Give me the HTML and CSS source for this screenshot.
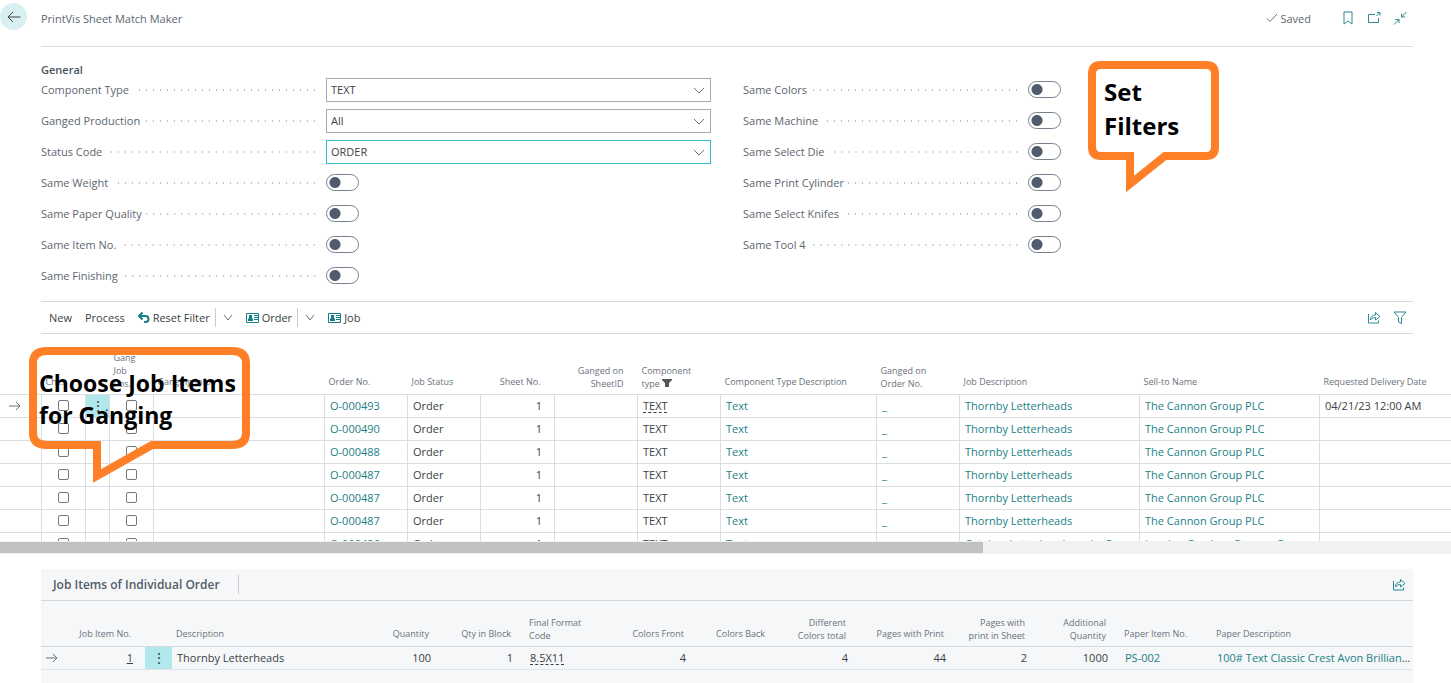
FILE: index.html
```
<!DOCTYPE html>
<html lang="en">
<head>
  <meta charset="UTF-8">
  <meta name="viewport" content="width=device-width, initial-scale=1.0">
  <title>PrintVis Sheet Match Maker</title>
  <link rel="stylesheet" href="styles.css">
</head>
<body>
  <header class="topbar">
    <button type="button" class="back" aria-label="Back">
      <svg width="16" height="16" viewBox="0 0 16 16"><path d="M14.500 8H2M7 3L2 8l5 5"/></svg>
    </button>
    <div class="topbar-main">
      <h1>PrintVis Sheet Match Maker</h1>
      <span class="saved"><svg width="12" height="12" viewBox="0 0 12 12"><path d="M1 6.500l3 3 7-7.500"/></svg>Saved</span>
      <button type="button" class="icon" aria-label="Bookmark"><svg width="16" height="16" viewBox="0 0 16 16"><path d="M4 2h8v12l-4-3-4 3z"/></svg></button>
      <button type="button" class="icon" aria-label="Open in new window"><svg width="16" height="16" viewBox="0 0 16 16"><path d="M9 4.500H2.500v8h10V8M10.500 6l3-3M11 2.500h3v3"/></svg></button>
      <button type="button" class="icon" aria-label="Collapse"><svg width="16" height="16" viewBox="0 0 16 16"><path d="M14.500 2L9.500 7M9.500 3.500V7H13M2 14.500l5-5M3.500 9.500H7V13"/></svg></button>
    </div>
  </header>

  <main>
    <form class="general">
      <h2>General</h2>
      <div class="columns">
        <div class="column">
          <div class="field"><label for="componentType">Component Type</label><i></i><span class="select"><select id="componentType"><option>TEXT</option></select><svg width="12" height="8" viewBox="0 0 12 8"><path d="M1 1l5 5 5-5"/></svg></span></div>
          <div class="field"><label for="ganged">Ganged Production</label><i></i><span class="select"><select id="ganged"><option>All</option></select><svg width="12" height="8" viewBox="0 0 12 8"><path d="M1 1l5 5 5-5"/></svg></span></div>
          <div class="field"><label for="statusCode">Status Code</label><i></i><span class="select active"><select id="statusCode"><option>ORDER</option></select><svg width="12" height="8" viewBox="0 0 12 8"><path d="M1 1l5 5 5-5"/></svg></span></div>
          <div class="field"><label for="weight">Same Weight</label><i></i><span class="value"><input type="checkbox" class="switch" id="weight"></span></div>
          <div class="field"><label for="quality">Same Paper Quality</label><i></i><span class="value"><input type="checkbox" class="switch" id="quality"></span></div>
          <div class="field"><label for="itemNo">Same Item No.</label><i></i><span class="value"><input type="checkbox" class="switch" id="itemNo"></span></div>
          <div class="field"><label for="finishing">Same Finishing</label><i></i><span class="value"><input type="checkbox" class="switch" id="finishing"></span></div>
        </div>
        <div class="column">
          <div class="field"><label for="colors">Same Colors</label><i></i><span class="value"><input type="checkbox" class="switch" id="colors"></span></div>
          <div class="field"><label for="machine">Same Machine</label><i></i><span class="value"><input type="checkbox" class="switch" id="machine"></span></div>
          <div class="field"><label for="die">Same Select Die</label><i></i><span class="value"><input type="checkbox" class="switch" id="die"></span></div>
          <div class="field"><label for="cylinder">Same Print Cylinder</label><i></i><span class="value"><input type="checkbox" class="switch" id="cylinder"></span></div>
          <div class="field"><label for="knifes">Same Select Knifes</label><i></i><span class="value"><input type="checkbox" class="switch" id="knifes"></span></div>
          <div class="field"><label for="tool4">Same Tool 4</label><i></i><span class="value"><input type="checkbox" class="switch" id="tool4"></span></div>
        </div>
      </div>
    </form>

    <nav class="toolbar">
      <button type="button">New</button>
      <button type="button">Process</button>
      <button type="button"><svg class="undo" width="12" height="12" viewBox="0 0 12 12"><path d="M1 4h6.500a3 3 0 0 1 0 6H6M4.500 .5L1 4l3.500 3.500"/></svg>Reset Filter</button>
      <button type="button" class="more" aria-label="More reset options"><svg width="10" height="8" viewBox="0 0 10 8"><path d="M1 1l4 5 4-5"/></svg></button>
      <button type="button"><svg class="card" width="13" height="12" viewBox="0 0 13 12"><path class="frame" d="M.5 1.500h12v9H.5z"/><path d="M2 9V7l1-1V3h3v3l1 1v2zM8 3h4v1H8zM8 5h4v1H8zM8 7h4v1H8z"/></svg>Order</button>
      <button type="button" class="more" aria-label="More order options"><svg width="10" height="8" viewBox="0 0 10 8"><path d="M1 1l4 5 4-5"/></svg></button>
      <button type="button"><svg class="card" width="13" height="12" viewBox="0 0 13 12"><path class="frame" d="M.5 1.500h12v9H.5z"/><path d="M2 9V7l1-1V3h3v3l1 1v2zM8 3h4v1H8zM8 5h4v1H8zM8 7h4v1H8z"/></svg>Job</button>
      <span class="spacer"></span>
      <button type="button" class="icon" aria-label="Share"><svg width="16" height="16" viewBox="0 0 16 16"><path d="M2.500 4v9h10v-2.500M4.500 10c0-3.500 2-5 5-5V2.500L14 6.500l-4.500 3.500V7.500C7.500 7.500 6 8 4.500 10z"/></svg></button>
      <button type="button" class="icon" aria-label="Filter"><svg width="16" height="16" viewBox="0 0 16 16"><path d="M2 2h12L9.500 7.500v6l-3-1.500V7.500z"/></svg></button>
    </nav>

    <section class="grid">
      <table class="jobs">
        <colgroup>
          <col class="c-arrow"><col class="c-choose"><col class="c-menu"><col class="c-pos"><col class="c-info"><col class="c-order"><col class="c-status"><col class="c-sheet"><col class="c-wide"><col class="c-wide"><col class="c-type"><col class="c-wide"><col class="c-desc"><col class="c-desc"><col>
        </colgroup>
        <thead>
          <tr>
            <th></th><th>Ch...</th><th></th><th class="wrap">Gang<br>Job<br>Pos.</th><th>Ganging Info</th><th>Order No.</th><th>Job Status</th><th class="num">Sheet No.</th><th class="num wrap">Ganged on<br>SheetID</th>
            <th class="wrap">Component<br>type <svg width="10" height="8" viewBox="0 0 10 8"><path d="M0 0h10v1L7 4v4H3V4L0 1z"/></svg></th>
            <th>Component Type Description</th><th class="wrap">Ganged on<br>Order No.</th><th>Job Description</th><th>Sell-to Name</th><th>Requested Delivery Date</th>
          </tr>
        </thead>
        <tbody>
          <tr>
            <td class="arrow"><svg width="12" height="10" viewBox="0 0 12 10"><path d="M0 5h11M7 1l4 4-4 4"/></svg></td>
            <td class="tick"><input type="checkbox" aria-label="Choose"></td><td class="menu">⋮</td><td class="tick"><input type="checkbox" aria-label="Gang job position"></td><td></td>
            <td><a href="#">O-000493</a></td><td>Order</td><td class="num">1</td><td></td><td><span class="dotted">TEXT</span></td><td><a href="#">Text</a></td><td><a href="#">_</a></td><td><a href="#">Thornby Letterheads</a></td><td><a href="#">The Cannon Group PLC</a></td><td>04/21/23 12:00 AM</td>
          </tr>
          <tr>
            <td></td><td class="tick"><input type="checkbox" aria-label="Choose"></td><td></td><td class="tick"><input type="checkbox" aria-label="Gang job position"></td><td></td>
            <td><a href="#">O-000490</a></td><td>Order</td><td class="num">1</td><td></td><td>TEXT</td><td><a href="#">Text</a></td><td><a href="#">_</a></td><td><a href="#">Thornby Letterheads</a></td><td><a href="#">The Cannon Group PLC</a></td><td></td>
          </tr>
          <tr>
            <td></td><td class="tick"><input type="checkbox" aria-label="Choose"></td><td></td><td class="tick"><input type="checkbox" aria-label="Gang job position"></td><td></td>
            <td><a href="#">O-000488</a></td><td>Order</td><td class="num">1</td><td></td><td>TEXT</td><td><a href="#">Text</a></td><td><a href="#">_</a></td><td><a href="#">Thornby Letterheads</a></td><td><a href="#">The Cannon Group PLC</a></td><td></td>
          </tr>
          <tr>
            <td></td><td class="tick"><input type="checkbox" aria-label="Choose"></td><td></td><td class="tick"><input type="checkbox" aria-label="Gang job position"></td><td></td>
            <td><a href="#">O-000487</a></td><td>Order</td><td class="num">1</td><td></td><td>TEXT</td><td><a href="#">Text</a></td><td><a href="#">_</a></td><td><a href="#">Thornby Letterheads</a></td><td><a href="#">The Cannon Group PLC</a></td><td></td>
          </tr>
          <tr>
            <td></td><td class="tick"><input type="checkbox" aria-label="Choose"></td><td></td><td class="tick"><input type="checkbox" aria-label="Gang job position"></td><td></td>
            <td><a href="#">O-000487</a></td><td>Order</td><td class="num">1</td><td></td><td>TEXT</td><td><a href="#">Text</a></td><td><a href="#">_</a></td><td><a href="#">Thornby Letterheads</a></td><td><a href="#">The Cannon Group PLC</a></td><td></td>
          </tr>
          <tr>
            <td></td><td class="tick"><input type="checkbox" aria-label="Choose"></td><td></td><td class="tick"><input type="checkbox" aria-label="Gang job position"></td><td></td>
            <td><a href="#">O-000487</a></td><td>Order</td><td class="num">1</td><td></td><td>TEXT</td><td><a href="#">Text</a></td><td><a href="#">_</a></td><td><a href="#">Thornby Letterheads</a></td><td><a href="#">The Cannon Group PLC</a></td><td></td>
          </tr>
          <tr>
            <td></td><td class="tick"><input type="checkbox" aria-label="Choose"></td><td></td><td class="tick"><input type="checkbox" aria-label="Gang job position"></td><td></td>
            <td><a href="#">O-000486</a></td><td>Order</td><td class="num">1</td><td></td><td>TEXT</td><td><a href="#">Text</a></td><td><a href="#">_</a></td><td><a href="#">Catalog, Letterheads and a Cover</a></td><td><a href="#">London Candoxy Storage C</a></td><td></td>
          </tr>
        </tbody>
      </table>
    </section>
    <div class="scrollbar"><div class="thumb"></div></div>

    <section class="items">
      <div class="items-head">
        <h2>Job Items of Individual Order</h2>
        <button type="button" class="icon" aria-label="Share"><svg width="16" height="16" viewBox="0 0 16 16"><path d="M2.500 4v9h10v-2.500M4.500 10c0-3.500 2-5 5-5V2.500L14 6.500l-4.500 3.500V7.500C7.500 7.500 6 8 4.500 10z"/></svg></button>
      </div>
      <table class="lines">
        <colgroup>
          <col class="l-arrow"><col class="l-no"><col class="l-menu"><col class="l-desc"><col class="l-qty"><col class="l-block"><col class="l-format"><col class="l-front"><col class="l-back"><col class="l-back"><col class="l-print"><col class="l-back"><col class="l-back"><col class="l-paper"><col>
        </colgroup>
        <thead>
          <tr>
            <th></th><th class="num">Job Item No.</th><th></th><th>Description</th><th class="num">Quantity</th><th class="num">Qty in Block</th><th class="wrap">Final Format<br>Code</th><th class="num">Colors Front</th><th class="num">Colors Back</th><th class="num wrap">Different<br>Colors total</th><th class="num">Pages with Print</th><th class="num wrap">Pages with<br>print in Sheet</th><th class="num wrap">Additional<br>Quantity</th><th>Paper Item No.</th><th>Paper Description</th>
          </tr>
        </thead>
        <tbody>
          <tr>
            <td class="arrow"><svg width="12" height="10" viewBox="0 0 12 10"><path d="M0 5h11M7 1l4 4-4 4"/></svg></td>
            <td class="num"><u>1</u></td><td class="menu">⋮</td><td>Thornby Letterheads</td><td class="num">100</td><td class="num">1</td><td><span class="dotted">8.5X11</span></td><td class="num">4</td><td></td><td class="num">4</td><td class="num">44</td><td class="num">2</td><td class="num">1000</td><td><a href="#">PS-002</a></td><td class="last"><a href="#">100# Text Classic Crest Avon Brilliant White</a></td>
          </tr>
        </tbody>
      </table>
    </section>
  </main>

  <div class="callout callout-filters">
    <svg width="131" height="134" viewBox="0 0 131 134"><path d="M13 5h105q9 0 9 9v73q0 9-9 9H77L42 124V96H13q-9 0-9-9V14q0-9 9-9z"/></svg>
    <p>Set<br>Filters</p>
  </div>
  <div class="callout callout-jobs">
    <svg width="221" height="137" viewBox="0 0 221 137"><path d="M18 4h185q14 0 14 12v70q0 12-14 12H123L68 129V98H18Q4 98 4 86V16Q4 4 18 4z"/></svg>
    <p>Choose Job Items<br>for Ganging</p>
  </div>
</body>
</html>
```
FILE: styles.css
```
* {
  box-sizing: border-box;
}
body {
  font-family: "Open Sans", "Noto Sans", sans-serif;
  font-size: 11px;
  color: #3b3f44;
  background-color: #fff;
  margin: 0;
  position: relative;
  overflow: hidden;
}
h1, h2, p {
  margin: 0;
}
button {
  font: inherit;
  color: inherit;
  background: none;
  border: none;
  padding: 0;
  cursor: pointer;
}
svg {
  display: block;
  fill: none;
  stroke: #6b737b;
}
a {
  color: #1c7f85;
  text-decoration: none;
}
.icon svg {
  stroke: #2b8a90;
}

/* top bar */
.topbar {
  display: flex;
  margin-right: 38px;
}
.back {
  width: 27px;
  height: 27px;
  margin: 3px 14px 0 0;
  border-radius: 50%;
  background-color: #d8f0f2;
  display: flex;
  align-items: center;
  justify-content: center;
}
.back svg {
  stroke: #444;
}
.topbar-main {
  flex: 1;
  display: flex;
  align-items: center;
  height: 47px;
  padding-bottom: 10px;
  border-bottom: 1px solid #dcdfe2;
  color: #5d666f;
}
.topbar-main h1 {
  flex: 1;
  font-size: 11px;
  font-weight: normal;
}
.topbar-main .icon {
  margin-left: 10px;
}
.topbar-main .icon:last-child {
  margin-right: 5px;
}
.saved {
  display: flex;
  align-items: center;
  gap: 2px;
  margin-right: 19px;
}

/* filter fields */
.general {
  margin: 0 38px 0 41px;
  padding: 15px 0 10px;
  color: #5d666f;
}
.general h2 {
  font-size: 11px;
  font-weight: 600;
  line-height: 16px;
  color: #4c5661;
  margin-bottom: -4px;
}
.columns {
  display: flex;
  gap: 32px;
}
.column {
  flex: 1;
}
.field {
  display: flex;
  align-items: center;
  height: 31px;
}
.field i {
  flex: 1;
  height: 2px;
  margin: 0 8px 0 4px;
  background: radial-gradient(circle, #b4bac0 1px, transparent 1px) right center / 7px 2px repeat-x;
}
.value, .select {
  width: 385px;
  display: flex;
}
.select {
  position: relative;
}
.select select {
  appearance: none;
  font: inherit;
  color: #3b3f44;
  width: 100%;
  height: 24px;
  padding: 0 4px;
  background: #fff;
  border: 1px solid #a5abb3;
  border-radius: 0;
}
.select.active select {
  border-color: #30bfc8;
}
.select svg {
  position: absolute;
  right: 6px;
  top: 9px;
}
.switch {
  appearance: none;
  width: 33px;
  height: 17px;
  margin: 0;
  border: 1px solid #76808c;
  border-radius: 9px;
  background: radial-gradient(circle at 8px 50%, #505c6d 5px, transparent 6px);
}

/* action bar */
.toolbar {
  display: flex;
  align-items: center;
  height: 33px;
  margin: 0 38px 0 41px;
  padding: 0 5px 0 8px;
  border-top: 1px solid #d5d8dc;
  border-bottom: 1px solid #d5d8dc;
}
.toolbar button {
  display: flex;
  align-items: center;
  gap: 3px;
  margin-right: 13px;
}
.toolbar .more {
  height: 19px;
  margin-left: -8px;
  padding-left: 7px;
  border-left: 1px solid #c9cdd1;
}
.toolbar .icon {
  margin: 0 0 0 10px;
}
.spacer {
  flex: 1;
}
.undo {
  stroke: #14808a;
  stroke-width: 2;
}
.card path {
  fill: #14808a;
  stroke: none;
}
.card .frame {
  fill: none;
  stroke: #14808a;
}

/* tables */
table {
  width: 100%;
  table-layout: fixed;
  border-collapse: collapse;
}
th {
  font-size: 9px;
  font-weight: normal;
  line-height: 13px;
  text-align: left;
  vertical-align: bottom;
  white-space: nowrap;
  color: #6a727b;
  padding: 0 4px 6px;
}
th.wrap {
  padding-bottom: 4px;
}
th svg {
  display: inline-block;
  fill: #555;
  stroke: none;
}
td {
  padding: 0 5px;
  white-space: nowrap;
  overflow: hidden;
  text-overflow: ellipsis;
}
.num {
  text-align: right;
}
th.num {
  padding-right: 14px;
}
td.num {
  padding-right: 12px;
}
td.last {
  padding-right: 0;
}
.dotted {
  text-decoration: underline dashed;
  text-underline-offset: 2px;
}
.menu {
  background-color: #b0e8eb;
  text-align: center;
  font-size: 14px;
  line-height: 16px;
}
.tick input {
  appearance: none;
  display: block;
  width: 11px;
  height: 11px;
  margin: 0 auto;
  border: 1px solid #777;
  border-radius: 2px;
  background-color: #fff;
}
.arrow svg {
  margin-left: 3px;
}
.lines .arrow svg {
  margin-left: 0;
}
.grid {
  height: 207px;
  padding-top: 8px;
  overflow: hidden;
}
.jobs thead tr {
  height: 52px;
}
.jobs tbody tr {
  height: 23px;
}
.jobs td {
  border: 1px solid #dadde2;
  height: 23px;
}
.jobs td:first-child, .jobs td:last-child {
  border-left-color: transparent;
  border-right: none;
}
.c-arrow { width: 41px; }
.c-choose, .c-pos { width: 44px; }
.c-menu { width: 24px; }
.c-info { width: 171px; }
.c-order { width: 83px; }
.c-status { width: 73px; }
.c-sheet { width: 74px; }
.c-wide { width: 83px; }
.c-type { width: 156px; }
.c-desc { width: 180px; }

.scrollbar {
  height: 13px;
  padding-top: 1px;
  background-color: #f1f1f1;
}
.thumb {
  width: 67.75%;
  height: 11px;
  background-color: #c1c1c1;
}

/* job items panel */
.items {
  margin: 15px 38px 0 41px;
  background-color: #f5f7f9;
  min-height: 120px;
}
.items-head {
  display: flex;
  align-items: center;
  justify-content: space-between;
  height: 32px;
  padding: 0 6px 0 12px;
  border-bottom: 1px solid #d5d8dc;
}
.items-head h2 {
  font-size: 12px;
  font-weight: 600;
  line-height: 19px;
  color: #525c68;
  padding-right: 18px;
  border-right: 1px solid #c9cdd1;
}
.lines thead tr {
  height: 45px;
}
.lines td {
  height: 23px;
  border-top: 1px solid #d5d8dc;
  border-bottom: 1px solid #e2e5e8;
}
.l-arrow { width: 22px; }
.l-no { width: 82px; }
.l-menu { width: 27px; }
.l-desc { width: 189px; }
.l-qty { width: 82px; }
.l-block { width: 82px; }
.l-format { width: 86px; }
.l-front { width: 87px; }
.l-back { width: 81px; }
.l-print { width: 98px; }
.l-paper { width: 92px; }

/* speech bubbles over the page */
.callout {
  position: absolute;
}
.callout path {
  stroke: #ff7f27;
  stroke-width: 8;
}
.callout p {
  position: absolute;
  font-weight: bold;
  color: #000;
  white-space: nowrap;
}
.callout-filters {
  left: 1088px;
  top: 60px;
}
.callout-filters p {
  left: 16px;
  top: 15px;
  font-size: 24px;
  line-height: 34px;
}
.callout-jobs {
  left: 29px;
  top: 347px;
}
.callout-jobs p {
  left: 10px;
  top: 20px;
  font-size: 23px;
  line-height: 32px;
}
```
